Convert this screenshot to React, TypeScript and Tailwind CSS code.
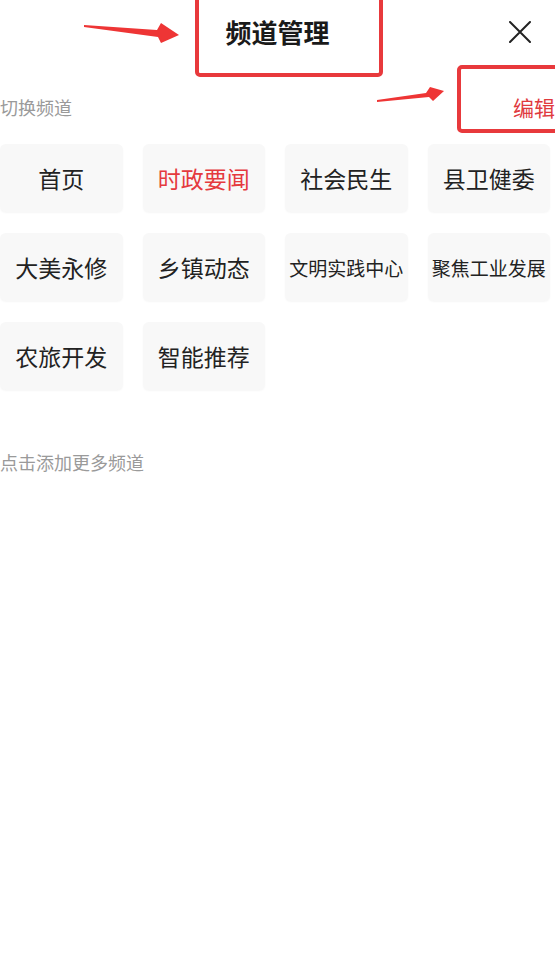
const CHANNELS = [
  { label: '首页' },
  { label: '时政要闻', active: true },
  { label: '社会民生' },
  { label: '县卫健委' },
  { label: '大美永修' },
  { label: '乡镇动态' },
  { label: '文明实践中心', small: true },
  { label: '聚焦工业发展', small: true },
  { label: '农旅开发' },
  { label: '智能推荐' },
];

function CloseIcon() {
  return (
    <svg width="22" height="22" viewBox="0 0 22 22" fill="none">
      <path d="M1 1 L21 21 M21 1 L1 21" stroke="#222" strokeWidth="2" strokeLinecap="round" />
    </svg>
  );
}

export default function App() {
  return (
    <div
      className="relative w-[555px] h-[970px] overflow-hidden bg-white"
      style={{ fontFamily: '"Noto Sans CJK SC", "Noto Sans", sans-serif' }}
    >
      {/* header */}
      <header className="grid h-16 grid-cols-[1fr_auto_1fr] items-center">
        <div />
        <h1 className="text-[26px] font-bold leading-none text-[#1a1a1a]">频道管理</h1>
        <div className="flex justify-end pr-[24px]">
          <button className="flex items-center justify-center">
            <CloseIcon />
          </button>
        </div>
      </header>

      {/* section label */}
      <div className="mt-[23px] flex h-10 items-center justify-between">
        <span className="text-[18px] leading-none text-[#9a9a9a]">切换频道</span>
        <button className="whitespace-nowrap text-[21px] leading-none text-[#e03a3e]">编辑</button>
      </div>

      {/* channel grid */}
      <div className="mt-[17px] grid w-[550px] grid-cols-4 gap-x-5 gap-y-[21px]">
        {CHANNELS.map(({ label, active, small }) => (
          <div
            key={label}
            className="flex h-[68px] items-center justify-center rounded-[6px] bg-[#f8f8f8] shadow-[0_1px_2px_rgba(0,0,0,0.04)]"
          >
            <span
              className={
                (small ? 'text-[19px] ' : 'text-[23px] ') +
                (active ? 'text-[#e53a3e]' : 'text-[#222]') +
                ' whitespace-nowrap leading-none'
              }
            >
              {label}
            </span>
          </div>
        ))}
      </div>

      <p className="mt-[60px] text-[18px] leading-6 text-[#9a9a9a]">点击添加更多频道</p>

      {/* annotations */}
      <div className="pointer-events-none absolute left-[195px] top-[-10px] h-[87px] w-[188px] rounded-[5px] border-4 border-[#e8393c]" />
      <div className="pointer-events-none absolute left-[457px] top-[65px] h-[68px] w-[120px] rounded-[5px] border-4 border-[#e8393c]" />
      <svg className="pointer-events-none absolute left-0 top-0" width="555" height="140" viewBox="0 0 555 140">
        <polygon points="84,25 157,30 161,23 179,35 161,43 158,37 84,27" fill="#ee3535" />
        <polygon points="377,100 426,93 430,87 444,91 433,101 429,97 377,102" fill="#ee3535" />
      </svg>
    </div>
  );
}
